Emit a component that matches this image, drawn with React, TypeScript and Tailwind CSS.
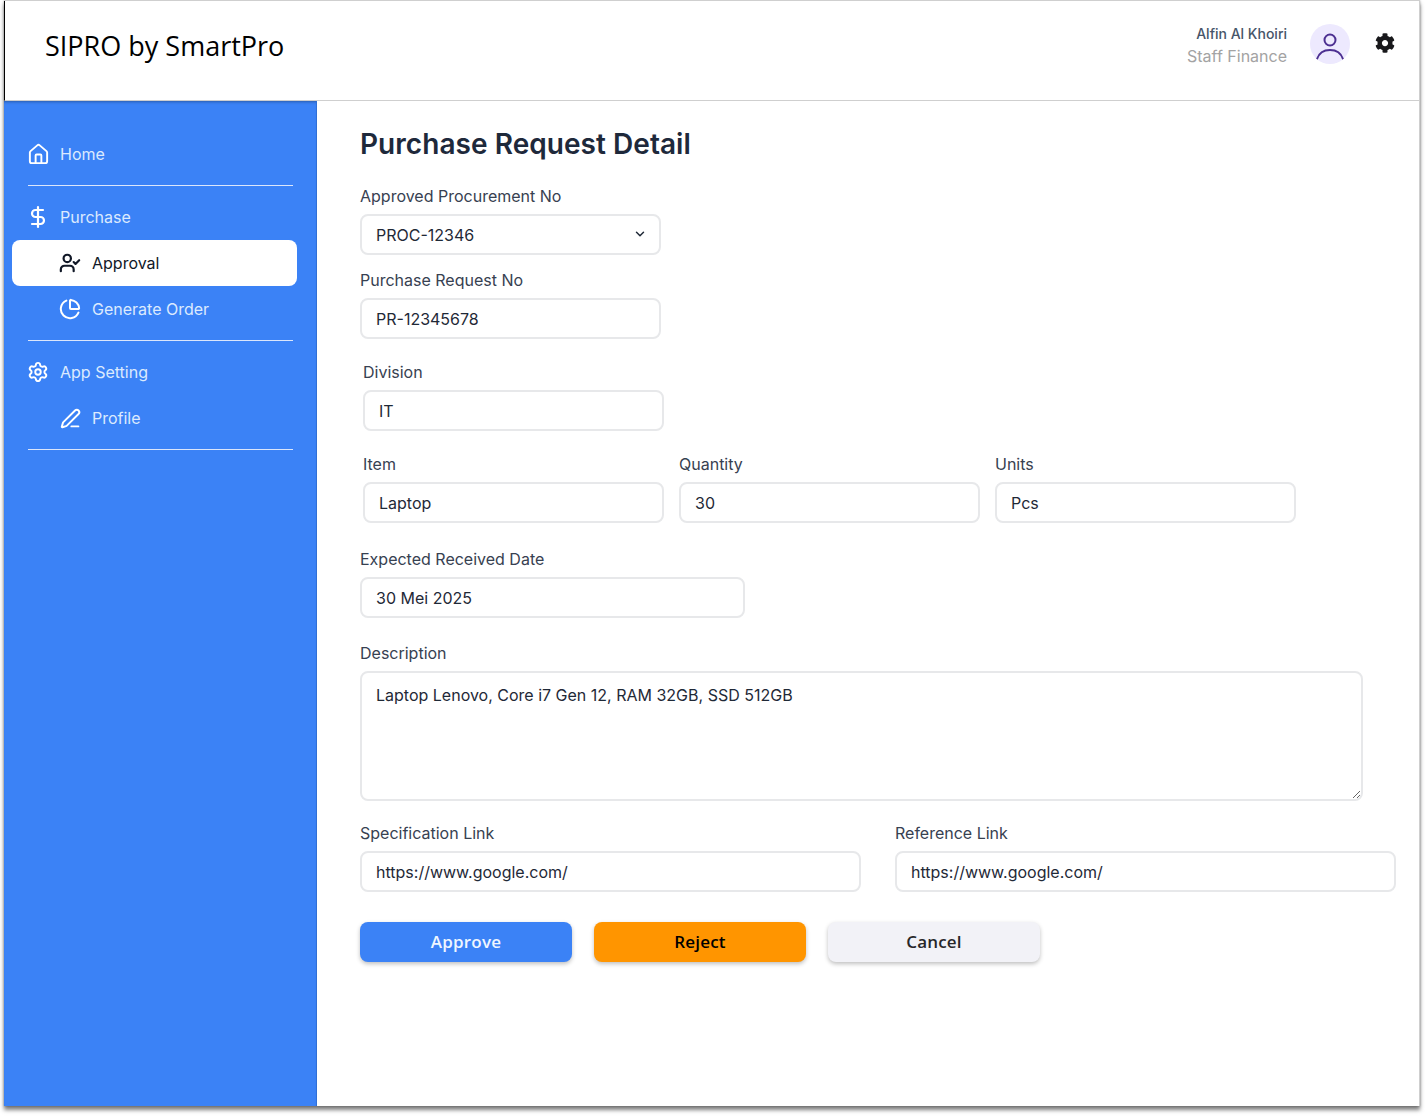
import { ChevronDown, ChartPie, DollarSign, House, PenLine, Settings, UserCheck } from "lucide-react";
import { FaCog } from "react-icons/fa";

const inputCls =
  "block h-[41px] w-full rounded-lg border-2 border-[#e7e8ea] bg-white px-[14px] text-[16px] text-[#1f2937] outline-none";

function Field({ label, value, className = "" }: { label: string; value: string; className?: string }) {
  return (
    <label className={`block ${className}`}>
      <span className="mb-[6px] block h-6 text-[16px] leading-6 text-[#374151]">{label}</span>
      <input readOnly defaultValue={value} className={inputCls} />
    </label>
  );
}

function NavItem({ icon, label, sub = false, active = false }: { icon: React.ReactNode; label: string; sub?: boolean; active?: boolean }) {
  return (
    <div
      className={`ml-2 mr-[19px] flex h-[46px] items-center gap-[12px] rounded-lg text-[16px] ${sub ? "pl-[48px]" : "pl-4"} ${
        active ? "bg-white text-[#111827]" : "text-[#dbeafe]"
      }`}
    >
      <span className={`flex w-5 justify-center ${active ? "text-[#111827]" : "text-white"}`}>{icon}</span>
      {label}
    </div>
  );
}

const Divider = () => <div className="my-2 ml-6 mr-[23px] h-px bg-[#dbe6fb]" />;

export default function App() {
  return (
    <div className="h-[1116px] w-[1425px] bg-white pb-[10px] pl-1 pr-[5px] font-['Inter',sans-serif]">
      <div className="flex h-full flex-col border-t border-r border-[#cfcfcf] bg-white shadow-[0_4px_4px_rgba(0,0,0,0.5),0_0_2px_rgba(0,0,0,0.3)]">
        <header className="flex h-[100px] shrink-0 items-start justify-between border-b border-l border-b-[#cfcfcf] border-l-black pr-[24px]">
          <h1 className="mt-[27px] pl-10 font-['Open_Sans',sans-serif] text-[27px] leading-9 text-black">
            SIPRO by SmartPro
          </h1>
          <div className="flex items-start">
            <div className="mt-[22px] text-right">
              <div className="text-[14px] font-medium leading-[22px] text-[#475569]">Alfin Al Khoiri</div>
              <div className="text-[16px] leading-[22px] text-[#a3a3a3]">Staff Finance</div>
            </div>
            <div className="ml-[23px] mt-[23px] h-10 w-10 overflow-hidden rounded-full bg-[#ede9fe]">
              <svg viewBox="0 0 40 40" className="h-10 w-10" fill="none" stroke="#4c2f91" strokeWidth="2">
                <circle cx="20" cy="16" r="5.5" />
                <path d="M7 35 C9 29 14 26 20 26 C26 26 31 29 33 35" strokeLinecap="round" />
              </svg>
            </div>
            <FaCog className="ml-[25px] mt-[32px] text-[#18181b]" size={20} />
          </div>
        </header>
        <div className="flex min-h-0 flex-1">
          <aside className="w-[313px] shrink-0 border-r border-[#2f6fd6] bg-[#3b82f6] pt-[30px] shadow-[inset_0_3px_3px_-2px_rgba(0,0,0,0.3)]">
            <NavItem icon={<House size={23} strokeWidth={2} className="shrink-0" />} label="Home" />
            <Divider />
            <NavItem icon={<DollarSign size={24} strokeWidth={2.2} className="shrink-0" />} label="Purchase" />
            <NavItem sub active icon={<UserCheck size={22} strokeWidth={2.4} className="shrink-0" />} label="Approval" />
            <NavItem sub icon={<ChartPie size={22} strokeWidth={2.2} className="shrink-0" />} label="Generate Order" />
            <Divider />
            <NavItem icon={<Settings size={22} strokeWidth={2.1} className="shrink-0" />} label="App Setting" />
            <NavItem sub icon={<PenLine size={21} strokeWidth={2.2} className="shrink-0" />} label="Profile" />
            <Divider />
          </aside>
          <main className="flex-1 pl-[43px] pr-[23px] pt-[25px]">
            <h2 className="text-[28px] font-semibold leading-9 tracking-[0.05px] text-[#1e293b]">Purchase Request Detail</h2>
            <label className="mt-[22px] block w-[301px]">
              <span className="mb-[6px] block h-6 text-[16px] leading-6 text-[#374151]">Approved Procurement No</span>
              <span className="relative block">
                <select defaultValue="PROC-12346" className={`${inputCls} appearance-none`}>
                  <option>PROC-12346</option>
                </select>
                <ChevronDown size={14} strokeWidth={2.5} className="absolute right-[14px] top-[13px] text-[#1f2937]" />
              </span>
            </label>
            <Field label="Purchase Request No" value="PR-12345678" className="mt-[13px] w-[301px]" />
            <Field label="Division" value="IT" className="ml-[3px] mt-[21px] w-[301px]" />
            <div className="ml-[3px] mt-[21px] flex gap-[15px]">
              <Field label="Item" value="Laptop" className="w-[301px]" />
              <Field label="Quantity" value="30" className="w-[301px]" />
              <Field label="Units" value="Pcs" className="w-[301px]" />
            </div>
            <Field label="Expected Received Date" value="30 Mei 2025" className="mt-[24px] w-[385px]" />
            <label className="mt-[23px] block w-[1003px]">
              <span className="mb-[6px] block h-6 text-[16px] leading-6 text-[#374151]">Description</span>
              <textarea
                readOnly
                defaultValue="Laptop Lenovo, Core i7 Gen 12, RAM 32GB, SSD 512GB"
                className="block h-[130px] w-full rounded-lg border-2 border-[#e7e8ea] bg-white px-[14px] py-[10px] text-[16px] leading-6 text-[#1f2937] outline-none"
              />
            </label>
            <div className="mt-[20px] flex gap-[34px]">
              <Field label="Specification Link" value="https://www.google.com/" className="w-[501px]" />
              <Field label="Reference Link" value="https://www.google.com/" className="w-[501px]" />
            </div>
            <div className="mt-[30px] flex gap-[22px] font-['Open_Sans',sans-serif] text-[17px] font-semibold tracking-[0.2px]">
              <button className="h-10 w-[212px] rounded-lg bg-[#3b82f6] text-[#eff6ff] shadow-[0_2px_4px_rgba(0,0,0,0.25)]">Approve</button>
              <button className="h-10 w-[212px] rounded-lg bg-[#ff9500] text-black shadow-[0_2px_4px_rgba(0,0,0,0.25)]">Reject</button>
              <button className="h-10 w-[212px] rounded-lg bg-[#f2f2f7] text-[#27272a] shadow-[0_2px_4px_rgba(0,0,0,0.25)]">Cancel</button>
            </div>
          </main>
        </div>
      </div>
    </div>
  );
}
